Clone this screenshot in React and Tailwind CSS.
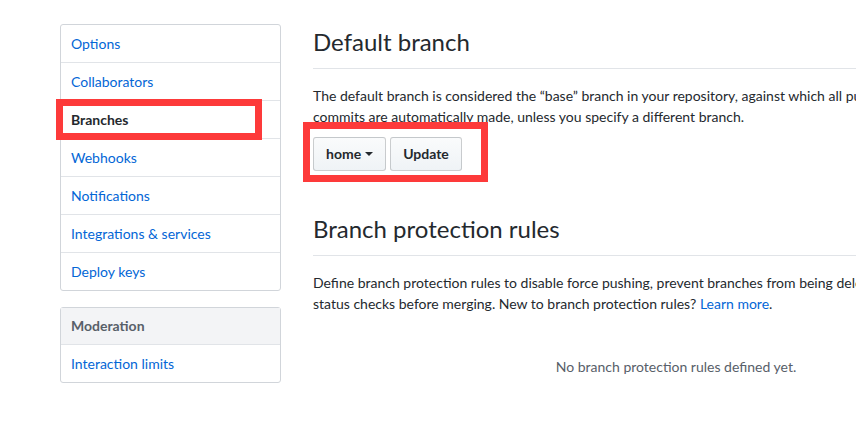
const menu = [
  { label: 'Options' },
  { label: 'Collaborators' },
  { label: 'Branches', selected: true },
  { label: 'Webhooks' },
  { label: 'Notifications' },
  { label: 'Integrations & services' },
  { label: 'Deploy keys' },
]

const font = { fontFamily: 'Lato, "Noto Sans", "Liberation Sans", sans-serif' }

const Btn = ({ children }) => (
  <button className="flex items-center h-[34px] px-3 rounded-[3px] border border-[rgba(27,31,35,0.2)] bg-gradient-to-b from-[#fafbfc] to-[#eff3f6] text-sm font-bold text-[#24292e] leading-5">
    {children}
  </button>
)

export default function App() {
  return (
    <div
      className="w-[856px] h-[421px] overflow-hidden bg-white text-[#24292e] relative"
      style={font}
    >
      <div className="flex pl-[60px] pt-[24px]">
        <nav className="w-[221px] shrink-0">
          <div className="rounded-[3px] border border-[#d1d5da] mb-4">
            {menu.map((item, i) => (
              <div
                key={item.label}
                className={`px-[10px] py-2 text-sm leading-[21px] ${i < menu.length - 1 ? 'border-b border-[#e1e4e8]' : ''} ${item.selected ? 'font-bold text-[#24292e]' : 'text-[#0366d6]'}`}
              >
                {item.label}
              </div>
            ))}
          </div>
          <div className="rounded-[3px] border border-[#d1d5da]">
            <div className="px-[10px] py-2 text-sm leading-[20px] font-bold text-[#586069] bg-[#f3f4f6] border-b border-[#e1e4e8]">
              Moderation
            </div>
            <div className="px-[10px] py-2 text-sm leading-[21px] text-[#0366d6]">
              Interaction limits
            </div>
          </div>
        </nav>

        <main className="ml-8 w-[726px] shrink-0">
          <div className="pb-2 border-b border-[#e1e4e8] mb-4">
            <h2 className="text-2xl leading-[36px] font-normal">Default branch</h2>
          </div>
          <p className="text-sm leading-[21px] mb-[10px] whitespace-nowrap">
            The default branch is considered the “base” branch in your repository, against which all pull requests and code
            <br />
            commits are automatically made, unless you specify a different branch.
          </p>
          <div className="flex gap-1">
            <Btn>
              home
              <span className="ml-1 inline-block w-0 h-0 border-x-4 border-x-transparent border-t-4 border-t-[#24292e]" />
            </Btn>
            <Btn>Update</Btn>
          </div>

          <div className="mt-10 pb-2 border-b border-[#e1e4e8] mb-4">
            <h2 className="text-2xl leading-[36px] font-normal">Branch protection rules</h2>
          </div>
          <p className="text-sm leading-[21px] mb-[10px] whitespace-nowrap">
            Define branch protection rules to disable force pushing, prevent branches from being deleted, and optionally require
            <br />
            status checks before merging. New to branch protection rules?{' '}
            <span className="text-[#0366d6]">Learn more</span>.
          </p>
          <div className="py-8 text-center text-sm leading-[21px] text-[#586069]">
            No branch protection rules defined yet.
          </div>
        </main>
      </div>

      {/* annotation boxes */}
      <div className="absolute left-[56px] top-[99px] w-[206px] h-[41px] border-[7px] border-[#fd3a3a]" />
      <div className="absolute left-[303px] top-[122px] w-[185px] h-[60px] border-[7px] border-[#fd3a3a]" />
    </div>
  )
}
